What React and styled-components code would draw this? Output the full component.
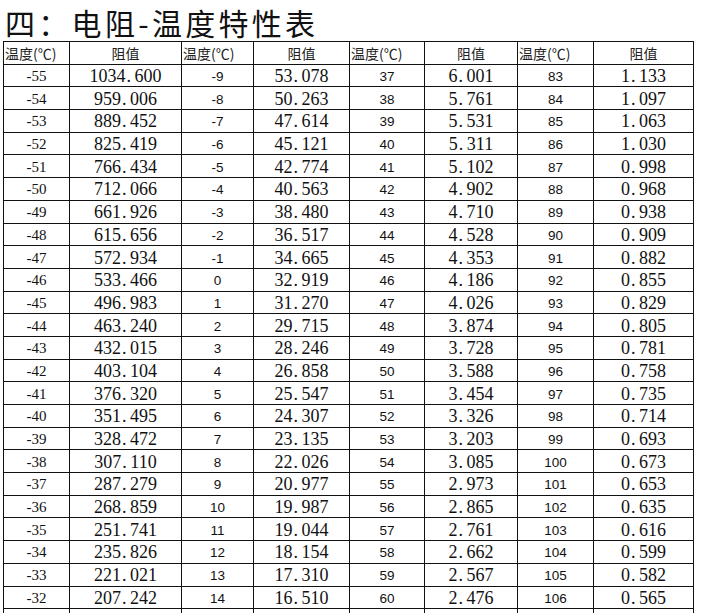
import React from 'react';
import styled, { createGlobalStyle } from 'styled-components';

const GlobalStyle = createGlobalStyle`
  html, body {
    margin: 0;
    padding: 0;
    background: #fff;
    overflow: hidden;
  }
`;

const Page = styled.div`
  width: 724px;
  height: 613px;
  overflow: hidden;
  padding-left: 3px;
  box-sizing: border-box;
`;

const Title = styled.h1`
  margin: 0;
  height: 39px;
  padding: 2px 0 0 2px;
  line-height: 41px;
  font-family: "Noto Sans CJK SC", sans-serif;
  font-weight: 400;
  font-size: 30px;
  letter-spacing: 3.3px;
  color: #111;
  white-space: nowrap;
`;

const Sheet = styled.table`
  border-collapse: collapse;
  table-layout: fixed;
  width: 690px;
  color: #111;
`;

const Row = styled.tr`
  height: 22.7px;
`;

const HeadCell = styled.th`
  border: 1px solid #111;
  padding: 0 0 0 ${p => (p.$left ? '1px' : '0')};
  text-align: ${p => (p.$left ? 'left' : 'center')};
  font-family: "Noto Sans CJK SC", sans-serif;
  font-weight: 400;
  font-size: 14px;
  line-height: 20px;
  white-space: nowrap;
  overflow: hidden;
  color: #222;
`;

const fonts = {
  temp: '"Liberation Serif", serif',
  tempSans: '"Liberation Sans", sans-serif',
  val: '"Liberation Serif", serif',
};

const sizes = { temp: '15px', tempSans: '13.5px', val: '18px' };

const Cell = styled.td`
  border: 1px solid #111;
  padding: 2px 0 0;
  text-align: center;
  font-family: ${p => fonts[p.$kind]};
  font-size: ${p => sizes[p.$kind]};
  line-height: 19px;
  white-space: nowrap;
  overflow: hidden;
`;

// half-width period cell, like the SimSun figures in the sheet
const Dot = styled.span`
  display: inline-block;
  width: 9px;
  padding-left: 1px;
  box-sizing: border-box;
  text-align: left;
`;

const Num = ({ v }) => {
  const [a, b] = v.split('.');
  return <>{a}<Dot>.</Dot>{b}</>;
};

const widths = [66, 112, 72, 96, 75, 93, 76, 100];

const colA = ['1034.600', '959.006', '889.452', '825.419', '766.434', '712.066', '661.926', '615.656', '572.934', '533.466', '496.983', '463.240', '432.015', '403.104', '376.320', '351.495', '328.472', '307.110', '287.279', '268.859', '251.741', '235.826', '221.021', '207.242'];
const colB = ['53.078', '50.263', '47.614', '45.121', '42.774', '40.563', '38.480', '36.517', '34.665', '32.919', '31.270', '29.715', '28.246', '26.858', '25.547', '24.307', '23.135', '22.026', '20.977', '19.987', '19.044', '18.154', '17.310', '16.510'];
const colC = ['6.001', '5.761', '5.531', '5.311', '5.102', '4.902', '4.710', '4.528', '4.353', '4.186', '4.026', '3.874', '3.728', '3.588', '3.454', '3.326', '3.203', '3.085', '2.973', '2.865', '2.761', '2.662', '2.567', '2.476'];
const colD = ['1.133', '1.097', '1.063', '1.030', '0.998', '0.968', '0.938', '0.909', '0.882', '0.855', '0.829', '0.805', '0.781', '0.758', '0.735', '0.714', '0.693', '0.673', '0.653', '0.635', '0.616', '0.599', '0.582', '0.565'];

export default function App() {
  return (
    <Page>
      <GlobalStyle />
      <Title>四：电阻-温度特性表</Title>
      <Sheet>
        <colgroup>
          {widths.map((w, i) => <col key={i} style={{ width: w }} />)}
        </colgroup>
        <tbody>
          <Row>
            {[0, 1, 2, 3].map(i => (
              <React.Fragment key={i}>
                <HeadCell $left>温度(℃)</HeadCell>
                <HeadCell>阻值</HeadCell>
              </React.Fragment>
            ))}
          </Row>
          {colA.map((v, i) => (
            <Row key={i}>
              <Cell $kind="temp">{-55 + i}</Cell>
              <Cell $kind="val"><Num v={v} /></Cell>
              <Cell $kind="tempSans">{-9 + i}</Cell>
              <Cell $kind="val"><Num v={colB[i]} /></Cell>
              <Cell $kind="tempSans">{37 + i}</Cell>
              <Cell $kind="val"><Num v={colC[i]} /></Cell>
              <Cell $kind="tempSans">{83 + i}</Cell>
              <Cell $kind="val"><Num v={colD[i]} /></Cell>
            </Row>
          ))}
          <Row>
            {widths.map((w, i) => <Cell key={i} $kind="val" />)}
          </Row>
        </tbody>
      </Sheet>
    </Page>
  );
}
